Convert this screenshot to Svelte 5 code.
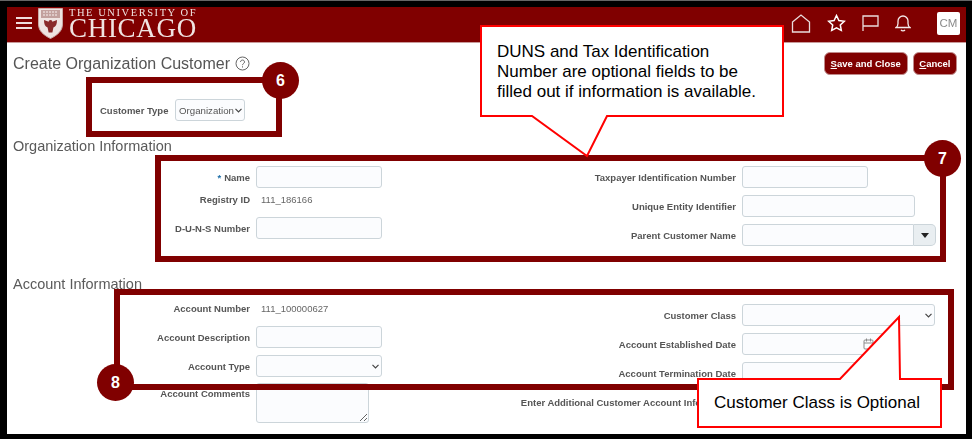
<script>
	const orgLeft = [
		{ label: 'Name', required: true, kind: 'input' },
		{ label: 'Registry ID', kind: 'value', value: '111_186166' },
		{ label: 'D-U-N-S Number', kind: 'input' }
	];
	const orgRight = [
		{ label: 'Taxpayer Identification Number', kind: 'input' },
		{ label: 'Unique Entity Identifier', kind: 'input', size: 'wide' },
		{ label: 'Parent Customer Name', kind: 'combo' }
	];
	const acctLeft = [
		{ label: 'Account Number', kind: 'value', value: '111_100000627' },
		{ label: 'Account Description', kind: 'input' },
		{ label: 'Account Type', kind: 'select' },
		{ label: 'Account Comments', kind: 'textarea' }
	];
	const acctRight = [
		{ label: 'Customer Class', kind: 'select', size: 'full' },
		{ label: 'Account Established Date', kind: 'date' },
		{ label: 'Account Termination Date', kind: 'date' },
		{ label: 'Enter Additional Customer Account Information', kind: 'none' }
	];
</script>

{#snippet chevron()}
	<svg class="chev" width="7" height="5" viewBox="0 0 7 5" fill="none" stroke="#444" stroke-width="1.200">
		<path d="M.5 .8 3.500 3.800 6.500 .8" />
	</svg>
{/snippet}

{#snippet field(row)}
	<div class="row" class:ro={row.kind === 'value'} class:tall={row.kind === 'textarea'}>
		<span class="label">
			{#if row.required}<i>*</i>{/if}{row.label}
		</span>
		{#if row.kind === 'input'}
			<input class="ctl {row.size || ''}" type="text" />
		{:else if row.kind === 'value'}
			<span class="value">{row.value}</span>
		{:else if row.kind === 'select'}
			<div class="sel">
				<select class="ctl {row.size || ''}"><option></option></select>
				{@render chevron()}
			</div>
		{:else if row.kind === 'textarea'}
			<textarea class="ctl area"></textarea>
		{:else if row.kind === 'combo'}
			<div class="combo">
				<input type="text" />
				<button aria-label="Search">
					<svg width="8" height="5" viewBox="0 0 8 5"><path d="M0 0h8L4 5z" fill="#222" /></svg>
				</button>
			</div>
		{:else if row.kind === 'date'}
			<div class="date">
				<input class="ctl" type="text" />
				<svg width="11" height="12" viewBox="0 0 11 12" fill="none" stroke="#8b8b8b">
					<rect x="1" y="2" width="9" height="9" rx="1" />
					<path d="M1 5h9M3.500 .5v3M7.500 .5v3" />
				</svg>
			</div>
		{/if}
	</div>
{/snippet}

<div class="frame">
	<div class="app">
		<header>
			<button class="burger" aria-label="Menu"><span></span><span></span><span></span></button>
			<svg class="shield" width="25" height="31" viewBox="0 0 25 31">
				<path d="M.5 .5h24v15.500c0 7-5 11-12 14.500C5.500 27 .5 23 .5 16z" fill="#efe4e2" stroke="#c9a9a6" />
				<rect x="3" y="2" width="19" height="8" fill="#c2a09d" />
				<path d="M5 4h15M5 7h15" stroke="#f7f0f0" stroke-width="1.200" stroke-dasharray="2 1" />
				<path d="M12.500 12c1.200 0 1.800 .8 1.800 1.800l4.700-1.800c0 4-1 6.500-3.600 7.500l-1 5h-3.800l-1-5C7 18.500 6 16 6 12l4.700 1.800c0-1 .6-1.800 1.800-1.800z" fill="#8a2a2a" />
			</svg>
			<div class="wordmark">
				<span class="small">THE UNIVERSITY OF</span>
				<span class="big">CHICAGO</span>
			</div>
			<nav>
				<svg width="20" height="19" viewBox="0 0 20 19" fill="none" stroke="#e9dcdc" stroke-width="1.300">
					<path d="M1.500 8 10 1l8.500 7v10h-17z" />
				</svg>
				<svg width="19" height="18" viewBox="0 0 19 18" fill="none" stroke="#fff" stroke-width="1.500">
					<path d="M9.500 1.500l2.400 5 5.400.7-4 3.800 1 5.400-4.800-2.600-4.800 2.600 1-5.400-4-3.800 5.400-.7z" />
				</svg>
				<svg width="17" height="18" viewBox="0 0 17 18" fill="none" stroke="#e9dcdc" stroke-width="1.300">
					<path d="M1 17V2h15v10H1" />
				</svg>
				<svg width="16" height="18" viewBox="0 0 16 18" fill="none" stroke="#f3e9e9" stroke-width="1.300">
					<path d="M1 13.500c1.500-1 2-2 2-4V7a5 5 0 0 1 10 0v2.500c0 2 .5 3 2 4zM6 16c1 1.200 3 1.200 4 0" />
				</svg>
				<span class="avatar">CM</span>
			</nav>
		</header>

		<main>
			<div class="title-row">
				<h1>Create Organization Customer
					<svg width="15" height="15" viewBox="0 0 15 15" fill="none" stroke="#666" stroke-width="1">
						<circle cx="7.500" cy="7.500" r="6.500" />
						<path d="M5.500 6c0-2.600 4-2.600 4 0 0 1.500-2 1.500-2 3.200M7.500 10.300v1.200" />
					</svg>
				</h1>
				<div class="actions">
					<button><u>S</u>ave and Close</button>
					<button><u>C</u>ancel</button>
				</div>
			</div>

			<div class="type-row">
				<span class="label">Customer Type</span>
				<div class="sel">
					<select class="ctl type"><option>Organization</option></select>
					{@render chevron()}
				</div>
			</div>

			<h2>Organization Information</h2>
			<div class="cols">
				<div class="col left">
					{#each orgLeft as row}{@render field(row)}{/each}
				</div>
				<div class="col right">
					{#each orgRight as row}{@render field(row)}{/each}
				</div>
			</div>

			<h2 class="second">Account Information</h2>
			<div class="cols">
				<div class="col left">
					{#each acctLeft as row}{@render field(row)}{/each}
				</div>
				<div class="col right">
					{#each acctRight as row}{@render field(row)}{/each}
				</div>
			</div>
		</main>
	</div>

	<!-- annotations sitting over the screenshot -->
	<div class="mark m6"></div>
	<div class="mark m7"></div>
	<div class="mark m8"></div>
	<span class="dot d6">6</span>
	<span class="dot d7">7</span>
	<span class="dot d8">8</span>

	<svg class="callouts" width="972" height="439" viewBox="0 0 972 439">
		<path d="M481 26H783V116H607L587 156 532 116H481Z" />
		<path d="M698 379H840L899 317 900 379H941V427H698Z" />
	</svg>
	<p class="note n1">DUNS and Tax Identification<br />Number are optional fields to be<br />filled out if information is available.</p>
	<p class="note n2">Customer Class is Optional</p>
</div>

<style>
	:global(body) {
		margin: 0;
		background: #000;
	}

	.frame {
		position: relative;
		width: 972px;
		height: 439px;
		box-sizing: border-box;
		padding: 6px 6px 5px 7px;
		background: #000;
		border-top: 1px solid #666;
		overflow: hidden;
		font-family: 'Liberation Sans', Arial, sans-serif;
	}

	.app {
		height: 100%;
		background: #fff;
		overflow: hidden;
		filter: blur(0.35px);
	}

	header {
		display: flex;
		align-items: center;
		box-sizing: border-box;
		height: 36px;
		padding: 0 6px 3px 9px;
		background: #800000;
		border-bottom: 1px solid #c99a9a;
	}

	.burger {
		display: flex;
		flex-direction: column;
		gap: 3px;
		width: 16px;
		padding: 0;
		margin-right: 6px;
		background: none;
		border: none;
	}

	.burger span {
		height: 2px;
		background: #f0dcdc;
	}

	.shield {
		flex-shrink: 0;
		margin-right: 6px;
	}

	.wordmark {
		display: flex;
		flex-direction: column;
		font-family: 'Liberation Serif', 'Times New Roman', serif;
		color: #f0e4e2;
	}

	.small {
		font-size: 10.500px;
		line-height: 10px;
		letter-spacing: 1.550px;
	}

	.big {
		font-size: 27px;
		line-height: 21px;
		letter-spacing: 0.700px;
	}

	nav {
		display: flex;
		align-items: center;
		margin-left: auto;
		gap: 16px;
	}

	.avatar {
		width: 23px;
		height: 23px;
		margin-left: 10px;
		background: #fff;
		border-radius: 2px;
		color: #8a8a8a;
		font-size: 11.500px;
		line-height: 23px;
		text-align: center;
	}

	.title-row {
		display: flex;
		justify-content: space-between;
		padding: 9px 9px 0 6px;
	}

	h1 {
		display: flex;
		align-items: center;
		gap: 5px;
		height: 23px;
		margin: 0;
		font-size: 16px;
		font-weight: 400;
		color: #555;
	}

	.actions {
		display: flex;
		gap: 5px;
	}

	.actions button {
		height: 23px;
		padding: 0 6px;
		background: #800000;
		border: 1px solid #c08a8a;
		border-radius: 6px;
		color: #fff;
		font-family: inherit;
		font-size: 9.500px;
		font-weight: 700;
	}

	.actions button:last-child {
		padding: 0 5.500px;
	}

	.type-row {
		display: flex;
		align-items: center;
		gap: 6px;
		height: 22px;
		margin: 24px 0 0 93px;
	}

	.type-row .label {
		width: 69px;
	}

	h2 {
		height: 18px;
		margin: 16px 0 11px 6px;
		font-size: 14.500px;
		line-height: 18px;
		font-weight: 400;
		color: #5a5a5a;
	}

	h2.second {
		margin-top: 22px;
	}

	.cols {
		display: flex;
	}

	.col {
		display: flex;
		flex-direction: column;
	}

	.col.left {
		width: 479px;
		--label-w: 243px;
	}

	.col.right {
		--label-w: 250px;
	}

	.row {
		display: flex;
		align-items: center;
		gap: 6px;
		height: 22px;
		margin-bottom: 7px;
	}

	.row.ro {
		margin-top: -7px;
	}

	.row.tall {
		align-items: flex-start;
		margin-top: -1px;
		height: 40px;
	}

	.row.tall .label {
		margin-top: 5px;
	}

	.label {
		flex-shrink: 0;
		font-size: 9.500px;
		font-weight: 700;
		color: #555;
		white-space: nowrap;
	}

	.row .label {
		width: var(--label-w);
		text-align: right;
	}

	.label i {
		margin-right: 3px;
		font-style: normal;
		color: #1f6fa8;
	}

	.value {
		padding-left: 5px;
		font-size: 9.500px;
		color: #666;
	}

	.ctl,
	.combo input {
		box-sizing: border-box;
		width: 126px;
		height: 22px;
		padding: 0 4px;
		background: #fbfcfe;
		border: 1px solid #ccd5da;
		border-radius: 3px;
		font-family: inherit;
		font-size: 10.500px;
		color: #555;
		outline: none;
	}

	select.ctl {
		display: block;
		appearance: none;
	}

	.sel {
		position: relative;
	}

	.chev {
		position: absolute;
		right: 3px;
		top: 9px;
	}

	.ctl.wide {
		width: 173px;
	}

	.ctl.full {
		width: 193px;
	}

	.ctl.type {
		width: 70px;
		padding: 0 3px;
		font-size: 9.700px;
	}

	.ctl.area {
		display: block;
		width: 113px;
		height: 40px;
	}

	.combo {
		display: flex;
		width: 194px;
	}

	.combo input {
		flex: 1;
		min-width: 0;
		border-radius: 3px 0 0 3px;
	}

	.combo button {
		display: flex;
		align-items: center;
		justify-content: center;
		width: 22px;
		height: 22px;
		padding: 0;
		background: #e9eef1;
		border: 1px solid #ccd5da;
		border-left: none;
		border-radius: 0 5px 5px 0;
	}

	.date {
		display: flex;
		align-items: center;
	}

	.date input {
		width: 143px;
	}

	.date svg {
		margin-left: -22px;
	}

	.mark {
		position: absolute;
		box-sizing: border-box;
		border: 6px solid #800000;
	}

	.m6 {
		left: 86px;
		top: 76px;
		width: 196px;
		height: 60px;
	}

	.m7 {
		left: 155px;
		top: 154px;
		width: 791px;
		height: 107px;
	}

	.m8 {
		left: 114px;
		top: 288px;
		width: 840px;
		height: 101px;
	}

	.dot {
		position: absolute;
		width: 37px;
		height: 37px;
		border-radius: 50%;
		background: #800000;
		color: #fff;
		font-size: 16px;
		font-weight: 700;
		line-height: 37px;
		text-align: center;
	}

	.d6 {
		left: 262px;
		top: 61px;
	}

	.d7 {
		left: 924px;
		top: 139px;
	}

	.d8 {
		left: 97px;
		top: 363px;
	}

	.callouts {
		position: absolute;
		left: 0;
		top: -1px;
	}

	.callouts path {
		fill: #fff;
		stroke: #f00;
		stroke-width: 2;
	}

	.note {
		position: absolute;
		margin: 0;
		font-size: 17px;
		line-height: 20px;
		color: #000;
	}

	.n1 {
		left: 497px;
		top: 41px;
		white-space: nowrap;
	}

	.n2 {
		left: 714px;
		top: 392px;
		white-space: nowrap;
	}
</style>
